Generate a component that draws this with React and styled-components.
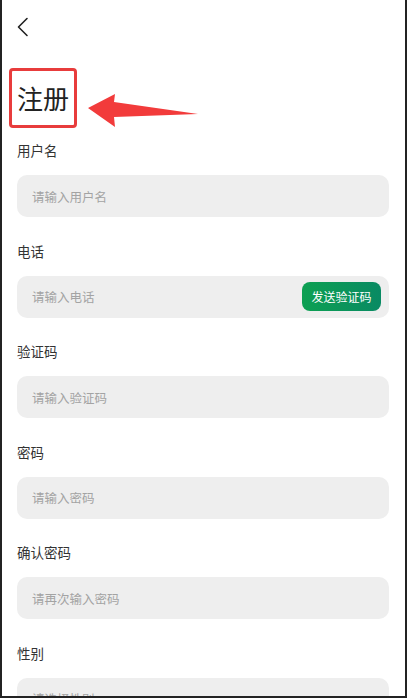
import React from "react";
import styled, { createGlobalStyle } from "styled-components";

const GlobalStyle = createGlobalStyle`
  * { box-sizing: border-box; }
  body {
    margin: 0;
    background: #1e1e1e;
    font-family: "Noto Sans CJK SC", "Noto Sans", sans-serif;
    overflow: hidden;
  }
`;

const Frame = styled.div`
  width: 407px;
  height: 698px;
  background: #232323;
  padding: 0 2px 2px 2px;
`;

const Page = styled.div`
  height: 696px;
  background: #ffffff;
  overflow: hidden;
  padding: 15px 16px 0 15px;
`;

const BackButton = styled.button`
  display: block;
  border: none;
  background: none;
  padding: 0;
  margin-left: -7px;
  width: 24px;
  height: 24px;
  cursor: pointer;
`;

const TitleRow = styled.div`
  display: flex;
  align-items: flex-start;
  gap: 10px;
  margin: 29px 0 0 -8px;
`;

const TitleBox = styled.div`
  width: 68px;
  height: 60px;
  border: 3px solid #e83c3c;
  border-radius: 4px;
  display: flex;
  align-items: center;
  justify-content: center;
`;

const Title = styled.h1`
  margin: 0;
  font-size: 26px;
  font-weight: 400;
  color: #222;
  line-height: 1;
`;

const Arrow = styled.svg`
  margin-top: 25px;
`;

const Form = styled.form`
  display: flex;
  flex-direction: column;
  gap: 23.6px;
  margin-top: 11px;
`;

const Field = styled.div`
  display: flex;
  flex-direction: column;
  gap: 15px;
`;

const Label = styled.label`
  font-size: 13.5px;
  line-height: 20px;
  color: #333;
`;

const InputWrap = styled.div`
  height: 42px;
  border-radius: 10px;
  background: #eeeeee;
  display: flex;
  align-items: center;
  padding: 0 8px 0 15px;
`;

const Input = styled.input`
  flex: 1;
  min-width: 0;
  border: none;
  outline: none;
  background: transparent;
  font-family: inherit;
  font-size: 12.5px;
  color: #333;
  padding: 0;
  &::placeholder {
    color: #a3a3a3;
  }
`;

const CodeButton = styled.button`
  height: 29px;
  width: 79px;
  border: none;
  border-radius: 8px;
  background: linear-gradient(90deg, #0da052, #098a63);
  color: #fff;
  font-family: inherit;
  font-size: 12px;
  padding: 0;
  cursor: pointer;
`;

const fields = [
  { label: "用户名", placeholder: "请输入用户名" },
  { label: "电话", placeholder: "请输入电话", code: true },
  { label: "验证码", placeholder: "请输入验证码" },
  { label: "密码", placeholder: "请输入密码", type: "password" },
  { label: "确认密码", placeholder: "请再次输入密码", type: "password" },
  { label: "性别", placeholder: "请选择性别" },
];

export default function App() {
  return (
    <>
      <GlobalStyle />
      <Frame>
        <Page>
          <BackButton aria-label="返回">
            <svg width="24" height="24" viewBox="0 0 24 24" fill="none">
              <path
                d="M17 3.5 L8.5 12 L17 20.5"
                stroke="#222"
                strokeWidth="1.6"
                strokeLinecap="round"
                strokeLinejoin="round"
              />
            </svg>
          </BackButton>

          <TitleRow>
            <TitleBox>
              <Title>注册</Title>
            </TitleBox>
            <Arrow width="112" height="36" viewBox="0 0 112 36">
              <path
                d="M1 15 L28 1 L27 9 L111 21 L27 24 L28 34 Z"
                fill="#f23b3b"
              />
            </Arrow>
          </TitleRow>

          <Form onSubmit={(e) => e.preventDefault()}>
            {fields.map((f) => (
              <Field key={f.label}>
                <Label>{f.label}</Label>
                <InputWrap>
                  <Input type={f.type || "text"} placeholder={f.placeholder} />
                  {f.code && <CodeButton type="button">发送验证码</CodeButton>}
                </InputWrap>
              </Field>
            ))}
          </Form>
        </Page>
      </Frame>
    </>
  );
}
